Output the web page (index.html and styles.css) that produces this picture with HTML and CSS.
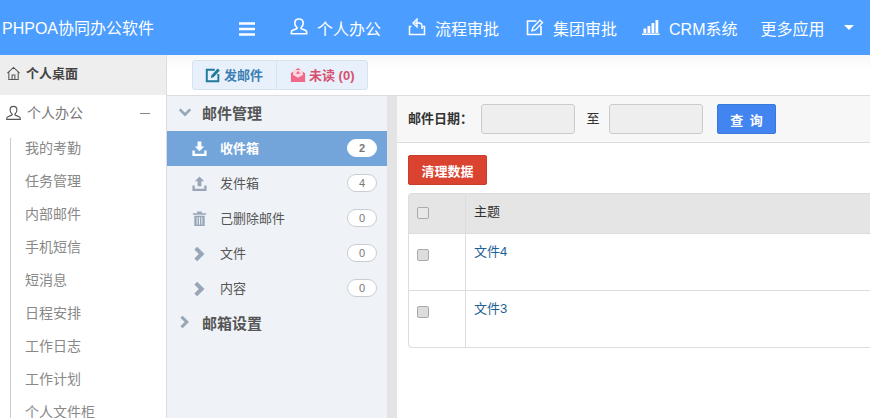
FILE: index.html
```html
<!DOCTYPE html>
<html lang="zh-CN">
<head>
  <meta charset="UTF-8" />
  <title>PHPOA协同办公软件</title>
  <link rel="stylesheet" href="styles.css">
</head>
<body>

<div class="topbar">
  <div class="brand">PHPOA协同办公软件</div>
  <svg class="burger" viewBox="0 0 16 14"><path d="M0 1.500h16M0 7h16M0 12.500h16" stroke="#fff" stroke-width="2.400"/></svg>
  <div class="nav-item nav-first">
    <svg viewBox="0 0 18 18"><path d="M9 1c2.800 0 4.200 2 4.200 4.200 0 1.900-1 3.400-2.100 4.300-.4.400-.2 1 .3 1.200l3.900 1.600c1 .4 1.400 1 1.400 2.200v1.200H1.300v-1.200c0-1.200.4-1.800 1.400-2.200l3.900-1.600c.5-.2.700-.8.300-1.200C5.800 8.600 4.800 7.100 4.800 5.200 4.800 3 6.200 1 9 1z" fill="none" stroke="#fff" stroke-width="1.600"/></svg>
    <span>个人办公</span>
  </div>
  <div class="nav-item">
    <svg viewBox="0 0 18 18"><path d="M3.500 8.500H1.500v8h15v-8h-1.800" fill="none" stroke="#fff" stroke-width="1.500"/><path d="M6.500 5h4.500c2 0 3 1.400 3 3.500V11" fill="none" stroke="#fff" stroke-width="1.500"/><path d="M9 1L5 5l4 4z" fill="none" stroke="#fff" stroke-width="1.300"/></svg>
    <span>流程审批</span>
  </div>
  <div class="nav-item">
    <svg viewBox="0 0 18 18"><path d="M10.500 3H1.500v13.500H15V8" fill="none" stroke="#fff" stroke-width="1.600"/><path d="M6 12.800l.9-3.300L14 2.200l2.500 2.400-7.100 7.300z" fill="none" stroke="#fff" stroke-width="1.400"/></svg>
    <span>集团审批</span>
  </div>
  <div class="nav-item nav-crm">
    <svg viewBox="0 0 18 18"><path d="M0 15.500h17.500V17H0zM1.500 10.500h2.800V15H1.500zM5.500 8h2.800v7H5.500zM9.500 5h2.800v10H9.500zM13.500 2h2.800v13h-2.800z" fill="#fff"/></svg>
    <span>CRM系统</span>
  </div>
  <div class="nav-item nav-more">
    <span>更多应用</span>
    <i class="caret"></i>
  </div>
</div>

<div class="main">
  <div class="sidebar">
    <div class="side-home">
      <svg viewBox="0 0 16 16"><path d="M1.500 7.500L8 1.500l6.500 6M3 6.500v8h10v-8M6.500 14.500V9.500h3v5" fill="none" stroke="#555" stroke-width="1.100"/></svg>
      <span>个人桌面</span>
    </div>
    <div class="side-group">
      <svg viewBox="0 0 18 18"><path d="M9 1.500c2.400 0 3.600 1.800 3.600 3.800 0 1.800-.9 3.300-2 4.200-.4.400-.2 1 .3 1.200l4 1.700c.9.400 1.300 1 1.300 2.100v.7H1.800v-.7c0-1.100.4-1.700 1.300-2.100l4-1.700c.5-.2.700-.8.300-1.200-1.100-.9-2-2.400-2-4.200 0-2 1.200-3.800 3.600-3.800z" fill="none" stroke="#555" stroke-width="1.200"/></svg>
      <span>个人办公</span>
      <i class="minus"></i>
    </div>
    <ul class="side-list">
      <li>我的考勤</li>
      <li>任务管理</li>
      <li>内部邮件</li>
      <li>手机短信</li>
      <li>短消息</li>
      <li>日程安排</li>
      <li>工作日志</li>
      <li>工作计划</li>
      <li>个人文件柜</li>
    </ul>
  </div>

  <div class="content">
    <div class="toolbar">
      <div class="btn-group">
        <div class="tool-btn tool-blue">
          <svg viewBox="0 0 18 18"><path d="M11 3H2v13h13V8" fill="none" stroke="#1f7a9c" stroke-width="2.200"/><path d="M6.500 12.500l.8-3.300L14.200 1.700l2.500 2.300-7 7.500z" fill="#1f7a9c"/></svg>
          <span>发邮件</span>
        </div>
        <div class="tool-btn tool-red">
          <svg viewBox="0 0 18 18"><path d="M1 7l8-6 8 6v10H1z" fill="#f0688a"/><path d="M3.500 3.500h11V9L9 12 3.500 9z" fill="#fbd6de"/><path d="M9 4.500l2.500 3h-5z" fill="#f0688a"/></svg>
          <span>未读 (0)</span>
        </div>
      </div>
    </div>

    <div class="panels">
      <div class="mail-nav">
        <div class="mail-head">
          <svg viewBox="0 0 16 16"><path d="M2 5l6 6 6-6" fill="none" stroke="#98a6b8" stroke-width="3"/></svg>
          <span>邮件管理</span>
        </div>
        <div class="mail-row mail-active">
          <svg viewBox="0 0 18 18"><path d="M7 1.500h4V7h3l-5 5-5-5h3zM1.500 11h2.500v3.500h10V11h2.500v6h-15z" fill="#fff"/></svg>
          <span class="mail-name">收件箱</span>
          <b class="count">2</b>
        </div>
        <div class="mail-row">
          <svg viewBox="0 0 18 18"><path d="M7 12h4V6.500h3l-5-5-5 5h3zM1.500 11h2.500v3.500h10V11h2.500v6h-15z" fill="#98a6b8"/></svg>
          <span class="mail-name">发件箱</span>
          <b class="count">4</b>
        </div>
        <div class="mail-row">
          <svg viewBox="0 0 18 18"><path d="M2 3.500h14V5H2zM6.500 3.500V1.500h5v2M3.500 6h11v11h-11z" fill="#98a6b8"/><path d="M6.500 7.500v8M9 7.500v8M11.500 7.500v8" stroke="#eff3f8" stroke-width="1"/></svg>
          <span class="mail-name">己删除邮件</span>
          <b class="count">0</b>
        </div>
        <div class="mail-row">
          <svg viewBox="0 0 16 16"><path d="M4.500 3l5.500 5.500L4.500 14" fill="none" stroke="#98a6b8" stroke-width="3.800"/></svg>
          <span class="mail-name">文件</span>
          <b class="count">0</b>
        </div>
        <div class="mail-row">
          <svg viewBox="0 0 16 16"><path d="M4.500 3l5.500 5.500L4.500 14" fill="none" stroke="#98a6b8" stroke-width="3.800"/></svg>
          <span class="mail-name">内容</span>
          <b class="count">0</b>
        </div>
        <div class="mail-head">
          <svg viewBox="0 0 16 16"><path d="M4 2l6 6-6 6" fill="none" stroke="#98a6b8" stroke-width="3.600"/></svg>
          <span>邮箱设置</span>
        </div>
      </div>

      <div class="mail-main">
        <div class="filter">
          <label>邮件日期：</label>
          <input class="date-input" type="text">
          <span class="to">至</span>
          <input class="date-input" type="text">
          <button class="btn-query">查 询</button>
        </div>
        <div class="list-body">
          <button class="btn-clear">清理数据</button>
          <table class="mail-table">
            <tr class="head-row">
              <th class="col-check"><i class="check"></i></th>
              <th>主题</th>
            </tr>
            <tr>
              <td class="col-check"><i class="check"></i></td>
              <td><a href="#">文件4</a></td>
            </tr>
            <tr>
              <td class="col-check"><i class="check"></i></td>
              <td><a href="#">文件3</a></td>
            </tr>
          </table>
        </div>
      </div>
    </div>
  </div>
</div>

</body>
</html>
```

FILE: styles.css
```css
* {
  margin: 0;
  padding: 0;
  box-sizing: border-box;
}

html, body {
  width: 100%;
  height: 100%;
  overflow: hidden;
  font-family: "Liberation Sans", "Noto Sans CJK SC", sans-serif;
  font-size: 14px;
  color: #333;
  background: #fff;
}

.topbar {
  display: flex;
  align-items: center;
  height: 55px;
  background: #4b9dff;
  color: #fff;
  font-size: 16px;
}

.brand {
  width: 239px;
  padding-left: 2px;
  margin-top: -2px;
}

.burger {
  width: 16px;
  height: 14px;
  margin-top: 3px;
}

.nav-item {
  display: flex;
  align-items: center;
  gap: 9px;
  margin-left: 27px;
}

.nav-item svg {
  width: 18px;
  height: 18px;
  margin-top: -2px;
}

.nav-first {
  margin-left: 35px;
}

.nav-crm {
  margin-left: 25px;
}

.nav-more {
  margin-left: 23px;
  gap: 19px;
}

.caret {
  width: 0;
  height: 0;
  border-left: 5px solid transparent;
  border-right: 5px solid transparent;
  border-top: 5px solid #fff;
}

.main {
  display: flex;
  height: 363px;
}

.sidebar {
  width: 167px;
  flex-shrink: 0;
  border-right: 1px solid #ddd;
  overflow: hidden;
  background: #fff;
}

.side-home {
  display: flex;
  align-items: center;
  gap: 5px;
  height: 40px;
  padding: 0 0 6px 6px;
  background: #eee;
  color: #444;
  font-size: 13px;
  font-weight: bold;
}

.side-home svg {
  width: 15px;
  height: 15px;
  margin-top: 3px;
}

.side-group {
  display: flex;
  align-items: center;
  gap: 5px;
  height: 36px;
  padding-left: 5px;
  color: #777;
}

.side-group span {
  margin-top: -2px;
}

.side-group svg {
  width: 17px;
  height: 17px;
}

.minus {
  width: 10px;
  height: 1px;
  background: #888;
  margin-left: auto;
  margin-right: 16px;
}

.side-list {
  list-style: none;
  margin: 7px 0 0 10px;
  padding-left: 14px;
  border-left: 1px solid #ccc;
  color: #888;
}

.side-list li {
  height: 33px;
  line-height: 20px;
}

.content {
  flex: 1;
  min-width: 0;
  display: flex;
  flex-direction: column;
}

.toolbar {
  height: 41px;
  padding: 5px 0 0 25px;
  background: linear-gradient(#f8f8f8, #fff 35%);
  border-bottom: 1px solid #ddd;
}

.btn-group {
  display: inline-flex;
  height: 30px;
  background: #e8f1fb;
  border: 1px solid #d5e2f0;
  border-radius: 3px;
}

.tool-btn {
  display: flex;
  align-items: center;
  gap: 3px;
  font-weight: bold;
  font-size: 13px;
}

.tool-btn span {
  margin-top: -2px;
}

.tool-btn svg {
  width: 16px;
  height: 16px;
}

.tool-blue {
  width: 84px;
  padding-left: 12px;
  border-right: 1px solid #d5e2f0;
  color: #3d7eb5;
}

.tool-red {
  padding: 0 12px 0 13px;
  color: #d6506f;
}

.panels {
  flex: 1;
  display: flex;
  min-height: 0;
}

.mail-nav {
  width: 220px;
  flex-shrink: 0;
  background: #eff3f8;
}

.mail-head {
  display: flex;
  align-items: center;
  gap: 10px;
  height: 35px;
  padding: 0 0 3px 11px;
  font-size: 15px;
  font-weight: bold;
  color: #555;
}

.mail-head svg {
  width: 14px;
  height: 14px;
}

.mail-row {
  display: flex;
  align-items: center;
  height: 35px;
  padding: 0 10px 0 24px;
  color: #555;
  font-size: 13px;
}

.mail-row svg {
  width: 17px;
  height: 17px;
}

.mail-name {
  margin: -2px 0 0 12px;
}

.count {
  margin: -2px 0 0 auto;
  width: 30px;
  height: 18px;
  line-height: 16px;
  text-align: center;
  border: 1px solid #c9ced4;
  border-radius: 9px;
  background: #fff;
  color: #777;
  font-weight: normal;
  font-size: 11px;
}

.mail-active {
  background: #74a5da;
  color: #fff;
  font-weight: bold;
}

.mail-active .count {
  border-color: #fff;
  font-weight: bold;
}

.mail-main {
  flex: 1;
  min-width: 0;
  border-left: 10px solid #e4e4e4;
}

.filter {
  display: flex;
  align-items: center;
  height: 47px;
  padding-left: 11px;
  background: #f7f7f7;
  border-bottom: 1px solid #ddd;
}

.filter label {
  width: 73px;
  margin-top: -4px;
  font-size: 13px;
  font-weight: bold;
}

.date-input {
  width: 94px;
  height: 30px;
  background: #eee;
  border: 1px solid #ccc;
  border-radius: 3px;
}

.to {
  width: 34px;
  padding-left: 2px;
  text-align: center;
  font-size: 13px;
  margin-top: -4px;
}

.btn-query {
  width: 59px;
  height: 30px;
  margin-left: 14px;
  background: #4285f0;
  border: 1px solid #3a78dc;
  border-radius: 2px;
  color: #fff;
  font: bold 13px "Liberation Sans", "Noto Sans CJK SC", sans-serif;
  word-spacing: 3px;
}

.list-body {
  padding: 12px 0 0 11px;
}

.btn-clear {
  display: block;
  width: 79px;
  height: 30px;
  background: #d9432f;
  border: 1px solid #c73c2a;
  border-radius: 2px;
  color: #fff;
  font: bold 13px "Liberation Sans", "Noto Sans CJK SC", sans-serif;
}

.mail-table {
  width: 100%;
  margin-top: 8px;
  border-collapse: separate;
  border-spacing: 0;
  border: 1px solid #ddd;
  border-right: 0;
  border-radius: 4px 0 0 4px;
  font-size: 13px;
}

.mail-table th,
.mail-table td {
  text-align: left;
  vertical-align: top;
  padding: 7px 8px;
  font-weight: normal;
  border-bottom: 1px solid #ddd;
}

.mail-table tr:last-child td {
  border-bottom: 0;
}

.mail-table .head-row th {
  height: 40px;
  padding-bottom: 13px;
  background: #e5e5e5;
  vertical-align: middle;
}

.mail-table td {
  height: 57px;
}

.mail-table tr:last-child td {
  height: 56px;
}

.mail-table .col-check {
  width: 57px;
  padding: 15px 0 0 8px;
  border-right: 1px solid #ddd;
}

.mail-table .head-row .col-check {
  padding: 0 0 2px 8px;
}

.mail-table a {
  color: #1d5f95;
  text-decoration: none;
}

.check {
  display: block;
  width: 12px;
  height: 12px;
  background: #ddd;
  border: 1px solid #aaa;
  border-radius: 2px;
}

.head-row .check {
  background: #e8e8e8;
}
```
